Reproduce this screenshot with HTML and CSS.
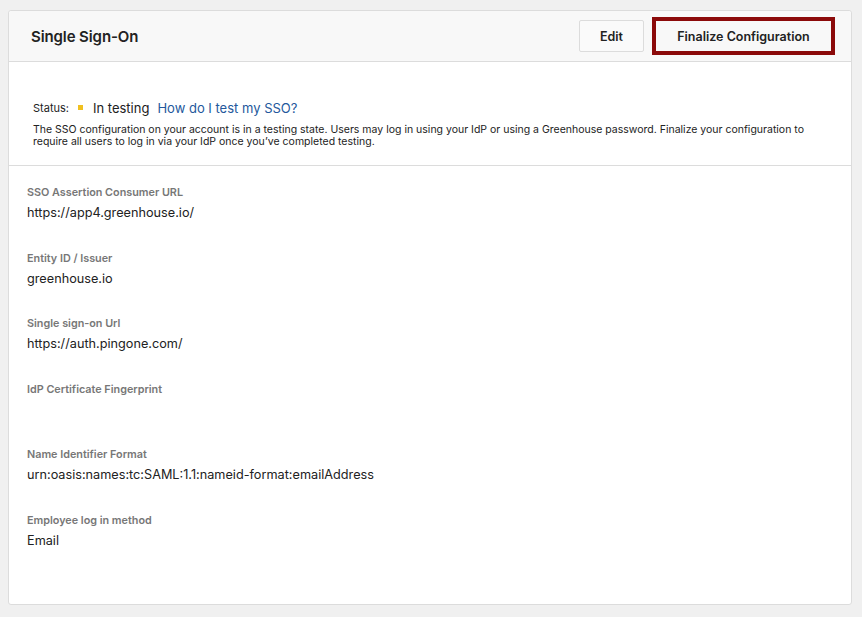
FILE: index.html
```html
<!DOCTYPE html>
<html>
<head>
<meta charset="utf-8">
<link rel="stylesheet" href="styles.css">
</head>
<body>
<div class="card">
  <div class="card-header">
    <h1 class="title">Single Sign-On</h1>
    <div class="actions">
      <button class="btn">Edit</button>
      <div class="highlight"><button class="btn btn-finalize">Finalize Configuration</button></div>
    </div>
  </div>
  <div class="status-section">
    <div class="status-row">
      <span class="status-label">Status:</span>
      <span class="dot"></span>
      <span class="status-value">In testing</span>
      <a class="status-link" href="#">How do I test my SSO?</a>
    </div>
    <p class="status-desc">The SSO configuration on your account is in a testing state. Users may log in using your IdP or using a Greenhouse password. Finalize your configuration to require all users to log in via your IdP once you’ve completed testing.</p>
  </div>
  <div class="fields">
    <div class="field">
      <div class="label">SSO Assertion Consumer URL</div>
      <div class="value">https://app4.greenhouse.io/</div>
    </div>
    <div class="field">
      <div class="label">Entity ID / Issuer</div>
      <div class="value">greenhouse.io</div>
    </div>
    <div class="field">
      <div class="label">Single sign-on Url</div>
      <div class="value">https://auth.pingone.com/</div>
    </div>
    <div class="field">
      <div class="label">IdP Certificate Fingerprint</div>
      <div class="value"></div>
    </div>
    <div class="field">
      <div class="label">Name Identifier Format</div>
      <div class="value">urn:oasis:names:tc:SAML:1.1:nameid-format:emailAddress</div>
    </div>
    <div class="field">
      <div class="label">Employee log in method</div>
      <div class="value">Email</div>
    </div>
  </div>
</div>
</body>
</html>
```

FILE: styles.css
```css
* { box-sizing: border-box; }
html, body { margin: 0; padding: 0; }
body {
  background: #f0f0f0;
  font-family: Inter, "Liberation Sans", Arial, sans-serif;
  color: #222;
  padding: 10px 10px 12px 8px;
}
.card {
  background: #fff;
  border: 1px solid #dcdcdc;
  border-radius: 3px;
  height: 595px;
  display: flex;
  flex-direction: column;
}
.card-header {
  background: #f8f8f8;
  border-bottom: 1px solid #dcdcdc;
  height: 51px;
  display: flex;
  align-items: center;
  justify-content: space-between;
  padding: 0 16px 0 22px;
  border-radius: 3px 3px 0 0;
}
.title {
  margin: 0;
  font-size: 15px;
  font-weight: 600;
  color: #222;
  letter-spacing: -0.1px;
}
.actions {
  display: flex;
  align-items: center;
  gap: 8px;
}
.btn {
  font-family: inherit;
  font-size: 12.5px;
  font-weight: 600;
  color: #222;
  background: #fafafa;
  border: 1px solid #dcdcdc;
  border-radius: 2px;
  height: 32px;
  padding: 0 20px;
  cursor: pointer;
}
.highlight {
  border: 4px solid #8b0a0a;
  padding: 0;
  height: 38px;
  display: flex;
}
.btn-finalize {
  height: 30px;
  width: 175px;
  border: none;
  background: #f8f8f8;
  padding: 0;
}
.status-section {
  border-bottom: 1px solid #dcdcdc;
  padding: 37px 24px 17px 24px;
}
.status-row {
  display: flex;
  align-items: center;
  height: 18px;
}
.status-label {
  font-size: 11px;
  color: #222;
}
.dot {
  width: 5px;
  height: 5px;
  background: #f0c020;
  margin: 0 10px 2px 9px;
}
.status-value {
  font-size: 13px;
  color: #222;
}
.status-link {
  font-size: 13px;
  color: #24589c;
  text-decoration: none;
  margin-left: 8px;
}
.status-desc {
  margin: 7px 0 0 0;
  font-size: 10.5px;
  line-height: 12px;
  color: #222;
}
.fields {
  padding: 20px 18px 0 18px;
  display: flex;
  flex-direction: column;
}
.field {
  height: 65.6px;
}
.label {
  font-size: 10.8px;
  font-weight: 600;
  color: #777;
  line-height: 14px;
}
.value {
  font-size: 12.7px;
  color: #222;
  margin-top: 5px;
  line-height: 16px;
  min-height: 16px;
}
```
